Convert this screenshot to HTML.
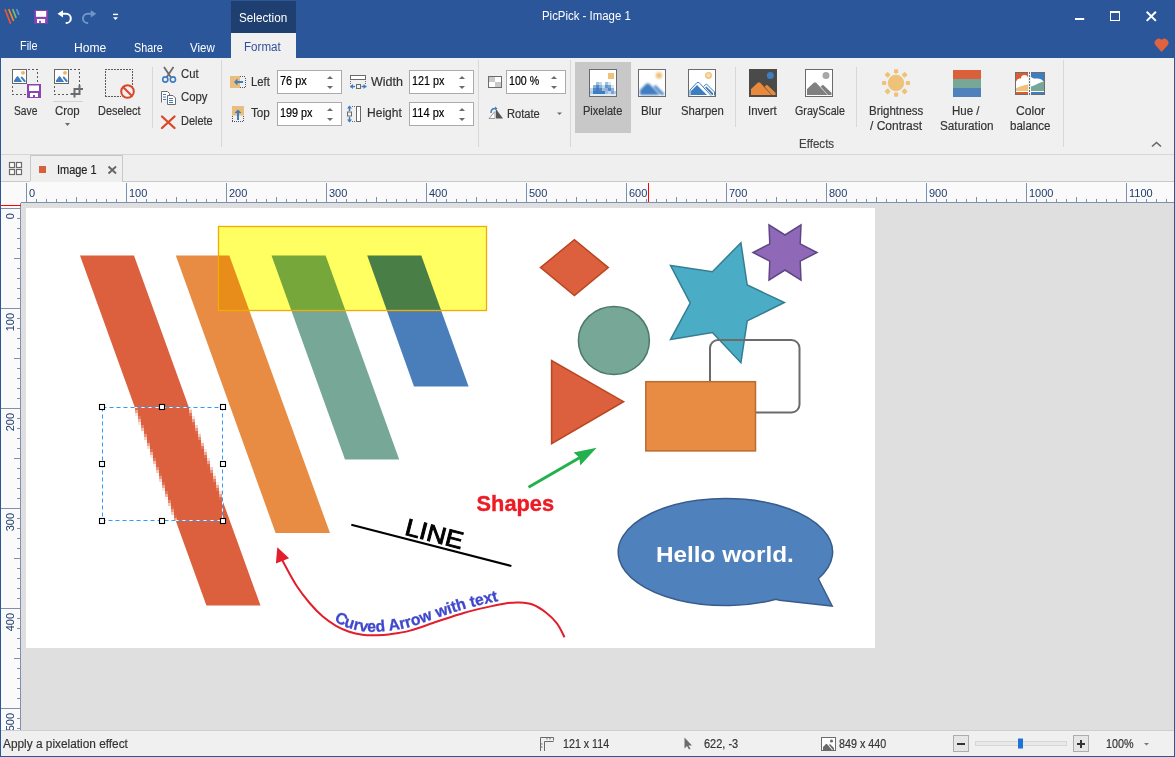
<!DOCTYPE html>
<html><head><meta charset="utf-8">
<style>
*{margin:0;padding:0;box-sizing:border-box}
html,body{width:1175px;height:757px;overflow:hidden;background:#f0f0f0;font-family:"Liberation Sans",sans-serif;font-size:12px;color:#444}
.a{position:absolute;white-space:nowrap;line-height:14px;transform-origin:0 0}
#txt div{-webkit-text-stroke:0.18px currentColor}
#txt div.w{-webkit-text-stroke:0}
#title{left:0;top:0;width:1175px;height:58px;background:#2b579a}
#selTab{left:231px;top:1px;width:65px;height:32px;background:#1f3f70}
#fmtTab{left:231px;top:33px;width:65px;height:25px;background:#f0f0f0}
.wt{color:#fff}
#ribbon{left:1px;top:58px;width:1173px;height:97px;background:#f0f0f0;border-bottom:1px solid #d6d6d6}
.sep{position:absolute;width:1px;background:#d8d8d8}
.lbl{position:absolute;white-space:nowrap;color:#444;text-align:center}
.inp{position:absolute;background:#fff;border:1px solid #ababab;height:24px}
.inp:after{content:"";position:absolute;right:8px;top:5px;border-left:3px solid transparent;border-right:3px solid transparent;border-bottom:3px solid #6b6b6b}.inp:before{content:"";position:absolute;right:8px;top:15px;border-left:3px solid transparent;border-right:3px solid transparent;border-top:3px solid #6b6b6b}
.inp span{position:absolute;left:3px;top:4px;color:#111}
#doctabs{left:1px;top:155px;width:1173px;height:27px;background:#f0f0f0;border-bottom:1px solid #d4d4d4}
#hruler{left:21px;top:182px;width:1153px;height:21px;background:#fafafa;border-bottom:1px solid #8a9ab8}
#vruler{left:1px;top:203px;width:20px;height:527px;background:#fafafa;border-right:1px solid #8a9ab8}
#canvas{left:21px;top:203px;width:1153px;height:527px;background:#dfdfdf}
#img{left:26px;top:208px;width:849px;height:440px;background:#fff}
#status{left:1px;top:730px;width:1173px;height:26px;background:#f0f0f0;border-top:1px solid #cfcfcf}
#bl{left:0;top:0;width:1px;height:757px;background:#2b579a}
#br{left:1174px;top:0;width:1px;height:757px;background:#2b579a}
#bb{left:0;top:756px;width:1175px;height:1px;background:#2b579a}
</style></head><body>
<div id="title" class="a"></div>
<div id="selTab" class="a"></div>
<div id="fmtTab" class="a"></div>
<svg class="a" style="left:0;top:0" width="1175" height="58" viewBox="0 0 1175 58">
 <g stroke-width="1.7" stroke-linecap="round">
  <path d="M5.2 9.7L10.4 23.2" stroke="#e8572f"/>
  <path d="M9 9.7L13.3 20.3" stroke="#f08a2c"/>
  <path d="M12.9 9.7L15.9 17.4" stroke="#7dbb6a"/>
  <path d="M16.8 9.7L18.8 14.3" stroke="#5a95d0"/>
 </g>
 <rect x="34.3" y="10" width="13.6" height="13.8" fill="#8a44b3"/>
 <rect x="36" y="11" width="10.2" height="5.8" fill="#fff"/>
 <path d="M37 18.9h8.1v4h-4.2v-2.1h-1.8v2.1h-2.1z" fill="#fff"/>
 <path d="M60 13.8h6.2a4.6 4.6 0 0 1 0 9.2h-0.5" fill="none" stroke="#fff" stroke-width="2"/>
 <path d="M57.5 13.8l5.5-3.6v7.2z" fill="#fff"/>
 <path d="M93.8 13.8h-6.2a4.6 4.6 0 0 0 0 9.2h0.5" fill="none" stroke="#7295c9" stroke-width="2"/>
 <path d="M96.3 13.8l-5.5-3.6v7.2z" fill="#7295c9"/>
 <rect x="113" y="13.7" width="5" height="1.4" fill="#fff"/>
 <path d="M113 17.2h5l-2.5 2.9z" fill="#fff"/>
 <!-- window controls -->
 <rect x="1075" y="18" width="9.2" height="2" fill="#fff"/>
 <rect x="1110.5" y="11.5" width="9" height="9" fill="none" stroke="#fff" stroke-width="1"/>
 <rect x="1110" y="11" width="10" height="2" fill="#fff"/>
 <path d="M1146.7 11.7l9.2 9.2M1155.9 11.7l-9.2 9.2" stroke="#fff" stroke-width="2"/>
 <path d="M1161.6 52l-5.6-6.2a4 4 0 0 1 5.6-5.9a4 4 0 0 1 5.6 5.9z" fill="#e0623f"/>
</svg>

<div id="ribbon" class="a"></div>
<!-- ribbon group 1 -->
<svg class="a" style="left:0;top:58px" width="480" height="97" viewBox="0 58 480 97">
 <g fill="none" stroke="#5a5a5a" stroke-width="1">
  <!-- save -->
  <rect x="12.5" y="69.5" width="14" height="14" fill="#fff" stroke="#666"/>
  <path d="M28 69.5H38M37.5 72V84M12.5 86V94M12 94.5H27" stroke-dasharray="2 2"/>
  <!-- crop -->
  <rect x="54.5" y="69.5" width="14" height="14" fill="#fff" stroke="#666"/>
  <path d="M70 69.5H80M79.5 72V85M54.5 86V94M54 94.5H70" stroke-dasharray="2 2"/>
  <!-- deselect -->
  <path d="M105 69.5H133M105.5 71V97M132.5 71V90M105 96.5H121" stroke-dasharray="2 1"/>
 </g>
 <g fill="#3f7dc1">
  <path d="M14 82V80.5L17 76.2H18L22.2 82Z M20.6 77.4L21.9 76.3L25.5 80.4V82H24Z"/>
  <path d="M56 82V80.5L59 76.2H60L64.2 82Z M62.6 77.4L63.9 76.3L67.5 80.4V82H66Z"/>
 </g>
 <circle cx="23" cy="72.8" r="1.9" fill="#f0b45a"/>
 <circle cx="65" cy="72.8" r="1.9" fill="#f0b45a"/>
 <!-- floppy -->
 <rect x="27" y="84" width="14" height="14" fill="#8a44b3"/>
 <rect x="29" y="85.5" width="10" height="5.5" fill="#fff"/>
 <path d="M30 93h8v4h-3v-2h-2v2h-3z" fill="#fff"/>
 <!-- crop tool -->
 <g fill="none" stroke="#6b6b6b" stroke-width="2">
  <rect x="74.5" y="89" width="5" height="5"/>
  <path d="M79.5 85v4M79.5 89h3.5M74.5 94h-4M74.5 94v3.5"/>
 </g>
 <!-- no sign -->
 <circle cx="127.5" cy="91.5" r="6.3" fill="#f0f0f0" stroke="#d9472b" stroke-width="2"/>
 <path d="M123 87l9 9" stroke="#d9472b" stroke-width="2"/>
 <!-- crop separator + arrow -->
 <rect x="53" y="101" width="30" height="1" fill="#d2d2d2"/>
 <path d="M65 123h5l-2.5 3z" fill="#6b6b6b"/>
 <!-- separators -->
 <rect x="152" y="67" width="1" height="61" fill="#d8d8d8"/>
 <rect x="221" y="60" width="1" height="87" fill="#d8d8d8"/>
 <rect x="478" y="60" width="1" height="87" fill="#d8d8d8"/>
 <!-- cut -->
 <path d="M164 67l7 10.5M173.5 67l-7 10.5" stroke="#6b6b6b" stroke-width="1.8" fill="none"/>
 <circle cx="165.3" cy="79.5" r="2.6" fill="none" stroke="#3f7dc1" stroke-width="1.6"/>
 <circle cx="172.9" cy="79.5" r="2.6" fill="none" stroke="#3f7dc1" stroke-width="1.6"/>
 <!-- copy -->
 <path d="M161.5 102.5v-11h6l2 2v1.5" fill="#fff" stroke="#6b6b6b" stroke-width="1"/>
 <path d="M167.5 95.5h5.5l2.5 2.5v6.5h-8z" fill="#fff" stroke="#6b6b6b" stroke-width="1"/>
 <path d="M163 94.5h3M163 97h3M163 99.5h3M169 98.5h4M169 100.5h4M169 102.5h4" stroke="#3f7dc1" stroke-width="1"/>
 <!-- delete -->
 <path d="M162 116.5l12.5 11.5M174.5 116.5l-12.5 11.5" stroke="#d9472b" stroke-width="2.3" fill="none" stroke-linecap="round"/>
 <!-- left icon -->
 <rect x="230" y="76" width="10" height="12" fill="#e9be7c"/>
 <path d="M240 76.5h6M245.5 78v10M240 87.5h6" fill="none" stroke="#555" stroke-dasharray="1 1"/>
 <path d="M235 82h8" stroke="#3f7dc1" stroke-width="2"/>
 <path d="M234 82l3.5-3.5v7z" fill="#3f7dc1"/>
 <!-- top icon -->
 <rect x="232" y="106" width="12" height="9.5" fill="#e9be7c"/>
 <path d="M232.5 116v6M232 121.5h12M243.5 116v6" fill="none" stroke="#555" stroke-dasharray="1 1"/>
 <path d="M238 112v8" stroke="#3f7dc1" stroke-width="2"/>
 <path d="M238 109.5l3.5 3.5h-7z" fill="#3f7dc1"/>
 <!-- width icon -->
 <rect x="350.5" y="75.5" width="15" height="4" fill="#fff" stroke="#6b6b6b"/>
 <path d="M350.5 81v3M365.5 81v3" stroke="#6b6b6b" stroke-dasharray="1 1"/>
 <rect x="356.5" y="84.5" width="4" height="4" fill="none" stroke="#6b6b6b"/>
 <path d="M350 86.5h5M361.5 86.5h5" stroke="#3f7dc1" stroke-width="1.5"/>
 <path d="M350 86.5l3-2.5v5zM366.5 86.5l-3-2.5v5z" fill="#3f7dc1"/>
 <!-- height icon -->
 <rect x="356.5" y="106.5" width="4" height="15" fill="#fff" stroke="#6b6b6b"/>
 <path d="M352 106.5h3M352 121.5h3" stroke="#6b6b6b" stroke-dasharray="1 1"/>
 <rect x="347.5" y="112" width="4" height="4" fill="none" stroke="#6b6b6b"/>
 <path d="M349.5 106v5M349.5 117v5" stroke="#3f7dc1" stroke-width="1.5"/>
 <path d="M349.5 105.5l2.5 3h-5zM349.5 122.5l2.5-3h-5z" fill="#3f7dc1"/>
</svg>
<div class="inp" style="left:277px;top:70px;width:65px"></div>
<div class="inp" style="left:277px;top:102px;width:65px"></div>
<div class="inp" style="left:409px;top:70px;width:65px"></div>
<div class="inp" style="left:409px;top:102px;width:65px"></div>
<svg class="a" style="left:480px;top:58px" width="695" height="97" viewBox="480 58 695 97">
 <defs>
  <filter id="bl1" x="-20%" y="-20%" width="140%" height="140%"><feGaussianBlur stdDeviation="1"/></filter>
 </defs>
 <!-- transparency -->
 <rect x="488.5" y="76.5" width="13" height="11" fill="#fff" stroke="#6b6b6b"/>
 <rect x="489" y="77" width="6" height="5" fill="#c9c9c9"/>
 <rect x="495" y="82" width="6" height="5" fill="#c9c9c9"/>
 <!-- rotate -->
 <path d="M489 118.5l6-7v7z" fill="#fff" stroke="#9a9a9a" stroke-width="1"/>
 <path d="M496 109l7 9.5h-7z" fill="#555"/>
 <path d="M491 113c0-3 1.5-4.5 4-4.5" fill="none" stroke="#3f7dc1" stroke-width="1.5"/>
 <path d="M495 106.5l2.5 2-2.5 2z" fill="#3f7dc1"/>
 <path d="M557 112.5h5l-2.5 2.5z" fill="#6b6b6b"/>
 <!-- separators -->
 <rect x="570" y="60" width="1" height="87" fill="#d8d8d8"/>
 <rect x="735" y="67" width="1" height="60" fill="#d8d8d8"/>
 <rect x="856" y="67" width="1" height="60" fill="#d8d8d8"/>
 <rect x="1063" y="60" width="1" height="87" fill="#d8d8d8"/>
 <!-- pixelate highlight -->
 <rect x="575" y="62" width="56" height="71" fill="#c8c8c8"/>
 <!-- pixelate icon -->
 <rect x="589.5" y="69.5" width="27" height="27" fill="#fff" stroke="#6b6b6b"/>
 <rect x="608" y="73" width="6" height="6" fill="#efc27a"/>
 <g fill="#3f7dc1"><rect x="596" y="82" width="3" height="3" opacity="0.5"/><rect x="599" y="82" width="3" height="3" opacity="0.3"/><rect x="605" y="82" width="3" height="3" opacity="0.5"/><rect x="608" y="82" width="3" height="3" opacity="0.2"/><rect x="593" y="85" width="3" height="3" opacity="0.6"/><rect x="596" y="85" width="3" height="3" opacity="0.9"/><rect x="599" y="85" width="3" height="3" opacity="0.6"/><rect x="602" y="85" width="3" height="3" opacity="0.3"/><rect x="605" y="85" width="3" height="3" opacity="0.8"/><rect x="608" y="85" width="3" height="3" opacity="0.7"/><rect x="611" y="85" width="3" height="3" opacity="0.2"/><rect x="590" y="88" width="3" height="3" opacity="0.3"/><rect x="593" y="88" width="3" height="3" opacity="0.9"/><rect x="596" y="88" width="3" height="3" opacity="1"/><rect x="599" y="88" width="3" height="3" opacity="0.9"/><rect x="602" y="88" width="3" height="3" opacity="0.5"/><rect x="605" y="88" width="3" height="3" opacity="0.6"/><rect x="608" y="88" width="3" height="3" opacity="0.9"/><rect x="611" y="88" width="3" height="3" opacity="0.6"/><rect x="590" y="91" width="3" height="3" opacity="0.4"/><rect x="593" y="91" width="3" height="3" opacity="1"/><rect x="596" y="91" width="3" height="3" opacity="1"/><rect x="599" y="91" width="3" height="3" opacity="1"/><rect x="602" y="91" width="3" height="3" opacity="1"/><rect x="605" y="91" width="3" height="3" opacity="0.5"/><rect x="608" y="91" width="3" height="3" opacity="0.35"/><rect x="611" y="91" width="3" height="3" opacity="0.7"/><rect x="614" y="91" width="3" height="3" opacity="0.4"/><rect x="590" y="94" width="26" height="2" opacity=".15"/></g>
 <!-- blur icon -->
 <rect x="638.5" y="69.5" width="27" height="27" fill="#fff" stroke="#6b6b6b"/>
 <g filter="url(#bl1)" transform="translate(638 69)">
  <circle cx="21" cy="6.5" r="3.2" fill="#efc27a"/>
  <path d="M2 26v-5l6.5-6.5h2.5l11 11.5z M15.5 17.5l2-1.5 8.5 8.5v1.5h-2.5z" fill="#3f7dc1"/>
 </g>
 <!-- sharpen icon -->
 <rect x="688.5" y="69.5" width="27" height="27" fill="#fff" stroke="#6b6b6b"/>
 <g transform="translate(688 69)">
  <circle cx="20.5" cy="6.5" r="2.8" fill="#f6dcae" stroke="#efc27a" stroke-width="1.3"/>
  <path d="M3 26v-4l6-6 10 10z M17 18.5l1.5-1 6.5 6.5v2h-1z" fill="#3f7dc1"/>
  <path d="M2 26.5v-5.5l7-7.5h2l12 13 M15.5 17.5l3-2.5 8 8v3.5" fill="none" stroke="#3f7dc1" stroke-width="1"/>
 </g>
 <!-- invert -->
 <rect x="749" y="69" width="28" height="28" fill="#4a4a4a"/>
 <g transform="translate(749 69)">
  <circle cx="21.3" cy="6.5" r="3.5" fill="#3f7dc1"/>
  <path d="M2 26v-6l7-6.5h2l11.5 12.5z M15.5 17.5l2.5-1.8 8.5 8v2.3h-3.5z" fill="#e8893c"/>
 </g>
 <!-- grayscale -->
 <rect x="805.5" y="69.5" width="27" height="27" fill="#fff" stroke="#6b6b6b"/>
 <g transform="translate(805 69)">
  <circle cx="21" cy="6.5" r="3.5" fill="#a8a8a8"/>
  <path d="M2 26v-6l7-6.5h2l11.5 12.5z M15.5 17.5l2.5-1.8 8.5 8v2.3h-3.5z" fill="#808080"/>
 </g>
 <!-- brightness -->
 <g fill="#efc27a">
  <circle cx="896" cy="83" r="8.2"/>
  <rect x="894" y="69.2" width="4.2" height="4.2" rx=".8"/><rect x="894" y="92.6" width="4.2" height="4.2" rx=".8"/>
  <rect x="882" y="80.9" width="4.2" height="4.2" rx=".8"/><rect x="905.8" y="80.9" width="4.2" height="4.2" rx=".8"/>
  <rect x="885.4" y="72.6" width="4.4" height="4.4" rx=".8" transform="rotate(45 887.6 74.8)"/>
  <rect x="902.4" y="72.6" width="4.4" height="4.4" rx=".8" transform="rotate(45 904.6 74.8)"/>
  <rect x="885.4" y="89.2" width="4.4" height="4.4" rx=".8" transform="rotate(45 887.6 91.4)"/>
  <rect x="902.4" y="89.2" width="4.4" height="4.4" rx=".8" transform="rotate(45 904.6 91.4)"/>
 </g>
 <!-- hue -->
 <rect x="953" y="70" width="28" height="9" fill="#d9603b"/>
 <rect x="953" y="79" width="28" height="9" fill="#76a797"/>
 <rect x="953" y="88" width="28" height="9" fill="#4f81bd"/>
 <!-- color balance -->
 <rect x="1015" y="72" width="30" height="23" fill="#6e6e6e"/>
 <rect x="1016" y="73" width="12" height="21" fill="#fff"/>
 <rect x="1031" y="73" width="13" height="21" fill="#fff"/>
 <rect x="1028" y="72" width="3" height="23" fill="#f0f0f0"/>
 <path d="M1029.5 72v23" stroke="#6e6e6e" stroke-dasharray="2 1"/>
 <path d="M1016 73h12v5.5a3.5 3.5 0 0 0 -7 0c-2 0-4 .5-5 3z" fill="#dd5b33"/>
 <path d="M1016 88.5c3-2 8-3.5 12-4v6.5h-12z" fill="#efc27a"/>
 <rect x="1016" y="92" width="12" height="2" fill="#dd5b33"/>
 <path d="M1031 73h13v9c-2-3-5-4-8-3.5c-2 .3-4-.5-5-1.5z" fill="#3f7dc1"/>
 <path d="M1031 86.5c4-1 8-4 13-5v9.5h-13z" fill="#76a797"/>
 <rect x="1031" y="92" width="13" height="2" fill="#3f7dc1"/>
 <!-- collapse caret -->
 <path d="M1152 146.5l4.5-4 4.5 4" fill="none" stroke="#666" stroke-width="1.6"/>
</svg>
<div class="inp" style="left:506px;top:70px;width:60px"></div>




<svg class="a" style="left:0;top:155px" width="1175" height="575" viewBox="0 155 1175 575">
<rect x="1" y="155" width="1173" height="27" fill="#efefef"/>
<rect x="1" y="181" width="29" height="1" fill="#c9c9c9"/>
<rect x="122" y="181" width="1052" height="1" fill="#c9c9c9"/>
<rect x="30" y="155" width="1" height="26" fill="#c9c9c9"/>
<rect x="122" y="155" width="1" height="26" fill="#c9c9c9"/>
<rect x="31" y="155" width="91" height="1" fill="#c6c6c6"/>
<rect x="9.5" y="162.5" width="5" height="5" fill="#fff" stroke="#6b6b6b" stroke-width="1.2"/>
<rect x="16.5" y="162.5" width="5" height="5" fill="#fff" stroke="#6b6b6b" stroke-width="1.2"/>
<rect x="9.5" y="169.5" width="5" height="5" fill="#fff" stroke="#6b6b6b" stroke-width="1.2"/>
<rect x="16.5" y="169.5" width="5" height="5" fill="#fff" stroke="#6b6b6b" stroke-width="1.2"/>
<rect x="39" y="166" width="7" height="7" fill="#d9603b"/>
<path d="M108.5 166.5l7.5 7M116 166.5l-7.5 7" stroke="#666" stroke-width="1.9"/>
<rect x="21" y="203" width="1153" height="527" fill="#dfdfdf"/>
<rect x="26" y="208" width="849" height="440" fill="#fff"/>
<rect x="1" y="182" width="1173" height="20" fill="#fafafa"/>
<rect x="1" y="182" width="19" height="548" fill="#fafafa"/>
<rect x="21" y="202" width="1153" height="1" fill="#7d90b2"/>
<rect x="20" y="203" width="1" height="527" fill="#7d90b2"/>
<path d="M26.5 183V202M36.5 199V202M46.5 199V202M56.5 199V202M66.5 199V202M76.5 197V202M86.5 199V202M96.5 199V202M106.5 199V202M116.5 199V202M126.5 183V202M136.5 199V202M146.5 199V202M156.5 199V202M166.5 199V202M176.5 197V202M186.5 199V202M196.5 199V202M206.5 199V202M216.5 199V202M226.5 183V202M236.5 199V202M246.5 199V202M256.5 199V202M266.5 199V202M276.5 197V202M286.5 199V202M296.5 199V202M306.5 199V202M316.5 199V202M326.5 183V202M336.5 199V202M346.5 199V202M356.5 199V202M366.5 199V202M376.5 197V202M386.5 199V202M396.5 199V202M406.5 199V202M416.5 199V202M426.5 183V202M436.5 199V202M446.5 199V202M456.5 199V202M466.5 199V202M476.5 197V202M486.5 199V202M496.5 199V202M506.5 199V202M516.5 199V202M526.5 183V202M536.5 199V202M546.5 199V202M556.5 199V202M566.5 199V202M576.5 197V202M586.5 199V202M596.5 199V202M606.5 199V202M616.5 199V202M626.5 183V202M636.5 199V202M646.5 199V202M656.5 199V202M666.5 199V202M676.5 197V202M686.5 199V202M696.5 199V202M706.5 199V202M716.5 199V202M726.5 183V202M736.5 199V202M746.5 199V202M756.5 199V202M766.5 199V202M776.5 197V202M786.5 199V202M796.5 199V202M806.5 199V202M816.5 199V202M826.5 183V202M836.5 199V202M846.5 199V202M856.5 199V202M866.5 199V202M876.5 197V202M886.5 199V202M896.5 199V202M906.5 199V202M916.5 199V202M926.5 183V202M936.5 199V202M946.5 199V202M956.5 199V202M966.5 199V202M976.5 197V202M986.5 199V202M996.5 199V202M1006.5 199V202M1016.5 199V202M1026.5 183V202M1036.5 199V202M1046.5 199V202M1056.5 199V202M1066.5 199V202M1076.5 197V202M1086.5 199V202M1096.5 199V202M1106.5 199V202M1116.5 199V202M1126.5 183V202M1136.5 199V202M1146.5 199V202M1156.5 199V202M1166.5 199V202M1 208.5H20M17 218.5H20M17 228.5H20M17 238.5H20M17 248.5H20M14 258.5H20M17 268.5H20M17 278.5H20M17 288.5H20M17 298.5H20M1 308.5H20M17 318.5H20M17 328.5H20M17 338.5H20M17 348.5H20M14 358.5H20M17 368.5H20M17 378.5H20M17 388.5H20M17 398.5H20M1 408.5H20M17 418.5H20M17 428.5H20M17 438.5H20M17 448.5H20M14 458.5H20M17 468.5H20M17 478.5H20M17 488.5H20M17 498.5H20M1 508.5H20M17 518.5H20M17 528.5H20M17 538.5H20M17 548.5H20M14 558.5H20M17 568.5H20M17 578.5H20M17 588.5H20M17 598.5H20M1 608.5H20M17 618.5H20M17 628.5H20M17 638.5H20M17 648.5H20M14 658.5H20M17 668.5H20M17 678.5H20M17 688.5H20M17 698.5H20M1 708.5H20M17 718.5H20M17 728.5H20" stroke="#7d90b2" stroke-width="1"/>
<g font-family="Liberation Sans" font-size="11" fill="#1f3b6b">
<text x="29" y="197">0</text>
<text x="129" y="197">100</text>
<text x="229" y="197">200</text>
<text x="329" y="197">300</text>
<text x="429" y="197">400</text>
<text x="529" y="197">500</text>
<text x="629" y="197">600</text>
<text x="729" y="197">700</text>
<text x="829" y="197">800</text>
<text x="929" y="197">900</text>
<text x="1029" y="197">1000</text>
<text x="1129" y="197">1100</text>
<text transform="translate(14 213) rotate(-90)" text-anchor="end">0</text>
<text transform="translate(14 313) rotate(-90)" text-anchor="end">100</text>
<text transform="translate(14 413) rotate(-90)" text-anchor="end">200</text>
<text transform="translate(14 513) rotate(-90)" text-anchor="end">300</text>
<text transform="translate(14 613) rotate(-90)" text-anchor="end">400</text>
<text transform="translate(14 713) rotate(-90)" text-anchor="end">500</text>
</g>
<rect x="648" y="183" width="1" height="19" fill="#f00"/>
<rect x="1" y="205" width="20" height="1" fill="#f00"/>
</svg>
<svg class="a" style="left:26px;top:208px" width="849" height="440" viewBox="26 208 849 440" font-family="Liberation Sans">
<defs>
 <clipPath id="selc"><rect x="102" y="407" width="121" height="114"/></clipPath>
 <clipPath id="nosel"><path d="M26 208H875V648H26Z M102 407V521H223V407Z" clip-rule="evenodd"/></clipPath>
 <path id="tp" d="M316.1 605.1 L317.4 606.5 L318.7 607.9 L320.0 609.2 L321.3 610.5 L322.6 611.7 L323.8 612.8 L325.1 613.9 L326.3 615.0 L327.6 616.0 L328.9 617.0 L330.1 617.9 L331.4 618.8 L332.6 619.6 L333.9 620.5 L335.2 621.2 L336.5 622.0 L337.7 622.8 L339.0 623.5 L340.3 624.2 L341.5 624.8 L342.8 625.4 L344.0 626.0 L345.3 626.6 L346.6 627.1 L347.8 627.6 L349.1 628.0 L350.3 628.5 L351.6 628.9 L352.8 629.3 L354.1 629.6 L355.3 629.9 L356.6 630.2 L357.8 630.5 L359.1 630.7 L360.3 631.0 L361.6 631.2 L362.8 631.3 L364.1 631.5 L365.3 631.6 L366.6 631.7 L367.9 631.8 L369.2 631.8 L370.4 631.8 L371.7 631.8 L373.0 631.8 L374.3 631.8 L375.6 631.8 L376.9 631.8 L378.1 631.8 L379.3 631.7 L380.4 631.7 L381.5 631.6 L382.7 631.5 L384.0 631.4 L385.3 631.3 L386.7 631.1 L388.3 630.9 L390.1 630.7 L392.0 630.4 L393.9 630.2 L395.9 629.9 L398.0 629.6 L400.1 629.2 L402.3 628.8 L404.5 628.3 L406.8 627.8 L409.1 627.2 L411.5 626.5 L414.0 625.8 L416.6 624.9 L419.3 624.0 L422.1 623.1 L424.9 622.1 L427.7 621.1 L430.5 620.1 L433.3 619.1 L436.1 618.2 L438.8 617.3 L441.5 616.4 L444.3 615.5 L447.0 614.5 L449.8 613.6 L452.5 612.7 L455.3 611.8 L458.0 611.0 L460.8 610.1 L463.5 609.3 L466.4 608.6 L469.3 607.8 L472.3 607.0 L475.2 606.3 L478.2 605.6 L481.0 604.9 L483.8 604.3 L486.4 603.7 L488.8 603.2 L490.9 602.7 L492.8 602.3 L494.5 601.9 L496.0 601.5 L497.4 601.2 L498.6 601.0 L499.9 600.7 L501.0 600.5 L502.2 600.3 L503.5 600.1 L504.8 599.9 L506.2 599.8 L507.6 599.6 L509.0 599.4 L510.4 599.3 L511.8 599.2 L513.3 599.1 L514.7 599.0 L516.1 599.0 L517.6 599.0 L519.0 599.0 L520.4 599.1 L521.8 599.1 L523.2 599.2 L524.6 599.3 L526.1 599.5 L527.6 599.7 L529.1 599.9 L530.6 600.3 L532.2 600.7 L533.7 601.2 L535.3 601.8 L536.8 602.6 L538.3 603.3 L539.9 604.2"/>
</defs>
<path d="M80 255.5H134L260.5 605.6H206.4Z" fill="#dc5f3e" clip-path="url(#nosel)"/>
<g fill="#dc5f3e" shape-rendering="crispEdges"><rect x="135" y="407" width="3" height="3" opacity="0.92"/><rect x="138" y="407" width="51" height="3"/><rect x="189" y="407" width="3" height="3" opacity="0.11"/><rect x="135" y="410" width="3" height="3" opacity="0.56"/><rect x="138" y="410" width="51" height="3"/><rect x="189" y="410" width="3" height="3" opacity="0.47"/><rect x="135" y="413" width="3" height="3" opacity="0.19"/><rect x="138" y="413" width="51" height="3"/><rect x="189" y="413" width="3" height="3" opacity="0.83"/><rect x="138" y="416" width="3" height="3" opacity="0.83"/><rect x="141" y="416" width="51" height="3"/><rect x="192" y="416" width="3" height="3" opacity="0.19"/><rect x="138" y="419" width="3" height="3" opacity="0.47"/><rect x="141" y="419" width="51" height="3"/><rect x="192" y="419" width="3" height="3" opacity="0.56"/><rect x="138" y="422" width="3" height="3" opacity="0.14"/><rect x="141" y="422" width="51" height="3"/><rect x="192" y="422" width="3" height="3" opacity="0.92"/><rect x="141" y="425" width="3" height="3" opacity="0.75"/><rect x="144" y="425" width="51" height="3"/><rect x="195" y="425" width="3" height="3" opacity="0.28"/><rect x="141" y="428" width="3" height="3" opacity="0.39"/><rect x="144" y="428" width="51" height="3"/><rect x="195" y="428" width="3" height="3" opacity="0.64"/><rect x="141" y="431" width="3" height="3" opacity="0.06"/><rect x="144" y="431" width="3" height="3" opacity="0.97"/><rect x="147" y="431" width="48" height="3"/><rect x="195" y="431" width="3" height="3" opacity="0.94"/><rect x="198" y="431" width="3" height="3" opacity="0.06"/><rect x="144" y="434" width="3" height="3" opacity="0.67"/><rect x="147" y="434" width="51" height="3"/><rect x="198" y="434" width="3" height="3" opacity="0.36"/><rect x="144" y="437" width="3" height="3" opacity="0.31"/><rect x="147" y="437" width="51" height="3"/><rect x="198" y="437" width="3" height="3" opacity="0.72"/><rect x="144" y="440" width="3" height="3" opacity="0.03"/><rect x="147" y="440" width="3" height="3" opacity="0.94"/><rect x="150" y="440" width="51" height="3"/><rect x="201" y="440" width="3" height="3" opacity="0.08"/><rect x="147" y="443" width="3" height="3" opacity="0.58"/><rect x="150" y="443" width="51" height="3"/><rect x="201" y="443" width="3" height="3" opacity="0.44"/><rect x="147" y="446" width="3" height="3" opacity="0.22"/><rect x="150" y="446" width="51" height="3"/><rect x="201" y="446" width="3" height="3" opacity="0.81"/><rect x="150" y="449" width="3" height="3" opacity="0.86"/><rect x="153" y="449" width="51" height="3"/><rect x="204" y="449" width="3" height="3" opacity="0.17"/><rect x="150" y="452" width="3" height="3" opacity="0.50"/><rect x="153" y="452" width="51" height="3"/><rect x="204" y="452" width="3" height="3" opacity="0.53"/><rect x="150" y="455" width="3" height="3" opacity="0.14"/><rect x="153" y="455" width="51" height="3"/><rect x="204" y="455" width="3" height="3" opacity="0.89"/><rect x="153" y="458" width="3" height="3" opacity="0.81"/><rect x="156" y="458" width="51" height="3"/><rect x="207" y="458" width="3" height="3" opacity="0.25"/><rect x="153" y="461" width="3" height="3" opacity="0.42"/><rect x="156" y="461" width="51" height="3"/><rect x="207" y="461" width="3" height="3" opacity="0.61"/><rect x="153" y="464" width="3" height="3" opacity="0.08"/><rect x="156" y="464" width="3" height="3" opacity="0.97"/><rect x="159" y="464" width="48" height="3"/><rect x="207" y="464" width="3" height="3" opacity="0.94"/><rect x="210" y="464" width="3" height="3" opacity="0.03"/><rect x="156" y="467" width="3" height="3" opacity="0.69"/><rect x="159" y="467" width="51" height="3"/><rect x="210" y="467" width="3" height="3" opacity="0.33"/><rect x="156" y="470" width="3" height="3" opacity="0.33"/><rect x="159" y="470" width="51" height="3"/><rect x="210" y="470" width="3" height="3" opacity="0.69"/><rect x="156" y="473" width="3" height="3" opacity="0.03"/><rect x="159" y="473" width="3" height="3" opacity="0.94"/><rect x="162" y="473" width="48" height="3"/><rect x="210" y="473" width="3" height="3" opacity="0.97"/><rect x="213" y="473" width="3" height="3" opacity="0.08"/><rect x="159" y="476" width="3" height="3" opacity="0.64"/><rect x="162" y="476" width="51" height="3"/><rect x="213" y="476" width="3" height="3" opacity="0.42"/><rect x="159" y="479" width="3" height="3" opacity="0.25"/><rect x="162" y="479" width="51" height="3"/><rect x="213" y="479" width="3" height="3" opacity="0.78"/><rect x="162" y="482" width="3" height="3" opacity="0.89"/><rect x="165" y="482" width="51" height="3"/><rect x="216" y="482" width="3" height="3" opacity="0.14"/><rect x="162" y="485" width="3" height="3" opacity="0.53"/><rect x="165" y="485" width="51" height="3"/><rect x="216" y="485" width="3" height="3" opacity="0.50"/><rect x="162" y="488" width="3" height="3" opacity="0.17"/><rect x="165" y="488" width="51" height="3"/><rect x="216" y="488" width="3" height="3" opacity="0.86"/><rect x="165" y="491" width="3" height="3" opacity="0.81"/><rect x="168" y="491" width="51" height="3"/><rect x="219" y="491" width="3" height="3" opacity="0.22"/><rect x="165" y="494" width="3" height="3" opacity="0.47"/><rect x="168" y="494" width="51" height="3"/><rect x="219" y="494" width="3" height="3" opacity="0.58"/><rect x="165" y="497" width="3" height="3" opacity="0.08"/><rect x="168" y="497" width="51" height="3"/><rect x="219" y="497" width="3" height="3" opacity="0.92"/><rect x="222" y="497" width="1" height="3" opacity="0.08"/><rect x="168" y="500" width="3" height="3" opacity="0.72"/><rect x="171" y="500" width="51" height="3"/><rect x="222" y="500" width="1" height="3" opacity="0.83"/><rect x="168" y="503" width="3" height="3" opacity="0.36"/><rect x="171" y="503" width="52" height="3"/><rect x="168" y="506" width="3" height="3" opacity="0.06"/><rect x="171" y="506" width="3" height="3" opacity="0.94"/><rect x="174" y="506" width="49" height="3"/><rect x="171" y="509" width="3" height="3" opacity="0.64"/><rect x="174" y="509" width="49" height="3"/><rect x="171" y="512" width="3" height="3" opacity="0.31"/><rect x="174" y="512" width="49" height="3"/><rect x="174" y="515" width="3" height="3" opacity="0.92"/><rect x="177" y="515" width="46" height="3"/><rect x="174" y="518" width="3" height="3" opacity="0.56"/><rect x="177" y="518" width="46" height="3"/></g>
<path d="M175.8 255.5H229.3L330 533H275.6Z" fill="#e88c43"/>
<path d="M271.5 255.5H325.6L399.2 459.6H345Z" fill="#76a797"/>
<path d="M367.2 255.5H421.3L468.6 386.6H414Z" fill="#4a7ebb"/>
<rect x="218.5" y="226.5" width="268" height="84" fill="#ffff00" fill-opacity=".62" style="mix-blend-mode:multiply"/>
<rect x="218.5" y="226.5" width="268" height="84" fill="none" stroke="#f0ac00" stroke-width="1.3"/>
<path d="M540.5 267.6L574.4 239.7L608.3 267.6L574.4 295.5Z" fill="#dc5f3e" stroke="#b9461f" stroke-width="1.5"/>
<ellipse cx="613.9" cy="340.4" rx="35.5" ry="34" fill="#76a797" stroke="#4c7869" stroke-width="1.5"/>
<path d="M551.6 360.5L551.6 443.6L623.6 401.7Z" fill="#dc5f3e" stroke="#b9461f" stroke-width="1.5"/>
<path d="M740.9 242.8L747.2 285L784.4 302.5L747.2 320.9L740.9 362.7L712.4 332.6L670.5 339.6L690.2 303L670.5 265.4L712.4 271.7Z" fill="#4bacc6" stroke="#357d91" stroke-width="1.5" stroke-linejoin="miter"/>
<path d="M769.0 224.8 L785.0 235.0 L801.0 224.8 L800.2 243.8 L817.0 252.5 L800.2 261.2 L801.0 280.2 L785.0 270.0 L769.0 280.2 L769.8 261.2 L753.0 252.5 L769.8 243.8Z" fill="#9068b8" stroke="#5e4683" stroke-width="1.5"/>
<rect x="710" y="340" width="89.5" height="72.5" rx="8" fill="none" stroke="#6b6b6b" stroke-width="2"/>
<rect x="645.8" y="381.7" width="109.7" height="69.2" fill="#e88c43" stroke="#b96c30" stroke-width="1.5"/>
<path d="M528.5 487.2L586 454" stroke="#22b14c" stroke-width="3"/>
<path d="M596.6 447.7L573.6 452.6L579.3 457.6L580.3 465.5Z" fill="#22b14c"/>
<text x="476.6" y="511" font-size="22.5" font-weight="bold" fill="#ed1c24" stroke="#ed1c24" stroke-width=".4" textLength="77.4" lengthAdjust="spacingAndGlyphs">Shapes</text>
<path d="M351.3 524.7L511.4 566" stroke="#000" stroke-width="2"/>
<g transform="rotate(14.46 351.3 524.7)"><text x="404.5" y="521" font-size="24" fill="#000" stroke="#000" stroke-width=".9" textLength="59" lengthAdjust="spacingAndGlyphs">LINE</text></g>
<path d="M818.30 578.75L832.2 606L779.5 600.3L776.00 599.25A107.2 53.6 0 1 1 818.30 578.75Z" fill="#4f81bd" stroke="#385d8a" stroke-width="1.5"/>
<text x="656" y="561.5" font-size="22.5" font-weight="bold" fill="#fff" textLength="137.8" lengthAdjust="spacingAndGlyphs">Hello world.</text>
<path d="M564.5 637.2C563.3 634.9 560.1 627.7 557.1 623.6C554.1 619.5 550.3 615.9 546.2 612.7C542.1 609.5 537.0 606.2 532.5 604.5C528.0 602.8 523.4 602.7 518.9 602.5C514.4 602.3 509.8 602.8 505.3 603.4C500.8 604.0 498.5 604.5 491.7 606.1C484.9 607.7 473.6 610.1 464.5 612.7C455.4 615.3 446.3 618.5 437.2 621.5C428.1 624.5 418.1 628.5 410.0 630.6C401.9 632.8 394.5 633.6 388.8 634.4C383.1 635.2 380.1 635.2 375.7 635.3C371.3 635.4 366.8 635.4 362.4 634.8C358.0 634.2 353.6 633.3 349.2 631.8C344.8 630.3 340.4 628.3 336.0 625.8C331.6 623.3 327.2 620.4 322.8 616.6C318.4 612.8 314.0 608.2 309.6 603.0C305.2 597.8 300.7 592.1 296.4 585.5C292.1 578.9 286.5 568.2 284.0 563.5C281.5 558.8 281.9 558.1 281.5 557.0" fill="none" stroke="#e21e2b" stroke-width="2"/>
<path d="M277.3 547.3L275.9 563.5L289.1 558.2Z" fill="#e21e2b"/>
<text font-size="16" font-weight="bold" fill="#3f48cc" stroke="#3f48cc" stroke-width=".3"><textPath href="#tp" startOffset="23.5" textLength="171.2" lengthAdjust="spacingAndGlyphs">Curved Arrow with text</textPath></text>
<rect x="102.5" y="407.5" width="120" height="113" fill="none" stroke="#fff" stroke-width="1"/>
<rect x="102.5" y="407.5" width="120" height="113" fill="none" stroke="#3399ff" stroke-width="1" stroke-dasharray="4 3"/>
<rect x="99.5" y="404.5" width="5" height="5" fill="#fff" stroke="#000" stroke-width="1.1"/><rect x="159.5" y="404.5" width="5" height="5" fill="#fff" stroke="#000" stroke-width="1.1"/><rect x="220.5" y="404.5" width="5" height="5" fill="#fff" stroke="#000" stroke-width="1.1"/><rect x="99.5" y="461.5" width="5" height="5" fill="#fff" stroke="#000" stroke-width="1.1"/><rect x="220.5" y="461.5" width="5" height="5" fill="#fff" stroke="#000" stroke-width="1.1"/><rect x="99.5" y="518.5" width="5" height="5" fill="#fff" stroke="#000" stroke-width="1.1"/><rect x="159.5" y="518.5" width="5" height="5" fill="#fff" stroke="#000" stroke-width="1.1"/><rect x="220.5" y="518.5" width="5" height="5" fill="#fff" stroke="#000" stroke-width="1.1"/>
</svg>
<svg class="a" style="left:0;top:730px" width="1175" height="27" viewBox="0 730 1175 27">
<rect x="1" y="730" width="1173" height="26" fill="#f0f0f0"/>
<rect x="1" y="730" width="1173" height="1" fill="#cfcfcf"/>
<path d="M540.5 751v-13.5h13v3M544.5 751v-9.5h9M540.5 744h2M540.5 747h2M547 737.5v2M550 737.5v2" fill="none" stroke="#6b6b6b" stroke-width="1"/>
<path d="M684.5 737.5v11l2.5-2.5 2 3.5 1.5-.8-2-3.3h3.5z" fill="#6b6b6b"/>
<rect x="821.5" y="737.5" width="14" height="13" fill="#fff" stroke="#6b6b6b"/>
<circle cx="831.5" cy="741" r="1.6" fill="#6b6b6b"/>
<path d="M823 750v-3l3-3h1l5 6zM829 745l1-1 4 4v2h-1z" fill="#6b6b6b"/>
<rect x="953.5" y="735.5" width="15" height="16" fill="#e6e6e6" stroke="#adadad"/>
<rect x="957" y="743" width="8" height="2" fill="#333"/>
<rect x="1073.5" y="735.5" width="15" height="16" fill="#e6e6e6" stroke="#adadad"/>
<rect x="1077" y="743" width="8" height="2" fill="#333"/><rect x="1080" y="740" width="2" height="8" fill="#333"/>
<rect x="975.5" y="741.5" width="91" height="4" fill="#e9e9e9" stroke="#d6d6d6"/>
<rect x="1018" y="738.5" width="5" height="10" fill="#1f73d4"/>
<path d="M1144 743h5l-2.5 2.5z" fill="#777"/>
</svg>


<div id="txt">
<div class="a w" style="left:542.20px;top:9.24px;color:#fff;transform:scaleX(0.951)">PicPick - Image 1</div>
<div class="a w" style="left:239.00px;top:10.84px;color:#fff;transform:scaleX(0.976)">Selection</div>
<div class="a w" style="left:20.10px;top:39.24px;color:#fff;transform:scaleX(0.905)">File</div>
<div class="a w" style="left:74.20px;top:40.84px;color:#fff;transform:scaleX(1.011)">Home</div>
<div class="a w" style="left:134.10px;top:40.84px;color:#fff;transform:scaleX(0.897)">Share</div>
<div class="a w" style="left:189.70px;top:40.84px;color:#fff;transform:scaleX(0.957)">View</div>
<div class="a w" style="left:244.30px;top:40.44px;color:#34509c;transform:scaleX(0.967)">Format</div>
<div class="a" style="left:14.30px;top:103.54px;color:#333;transform:scaleX(0.853)">Save</div>
<div class="a" style="left:55.20px;top:103.54px;color:#333;transform:scaleX(0.949)">Crop</div>
<div class="a" style="left:97.50px;top:103.54px;color:#333;transform:scaleX(0.910)">Deselect</div>
<div class="a" style="left:180.50px;top:66.54px;color:#333;transform:scaleX(0.941)">Cut</div>
<div class="a" style="left:180.50px;top:90.44px;color:#333;transform:scaleX(0.946)">Copy</div>
<div class="a" style="left:180.50px;top:114.44px;color:#333;transform:scaleX(0.914)">Delete</div>
<div class="a" style="left:251.30px;top:74.74px;color:#333;transform:scaleX(0.938)">Left</div>
<div class="a" style="left:251.10px;top:106.44px;color:#333;transform:scaleX(0.976)">Top</div>
<div class="a" style="left:371.00px;top:74.74px;color:#333;transform:scaleX(1.043)">Width</div>
<div class="a" style="left:367.20px;top:106.44px;color:#333;transform:scaleX(1.004)">Height</div>
<div class="a" style="left:280.10px;top:73.84px;color:#000;transform:scaleX(0.913)">76 px</div>
<div class="a" style="left:280.10px;top:105.84px;color:#000;transform:scaleX(0.902)">199 px</div>
<div class="a" style="left:412.30px;top:73.84px;color:#000;transform:scaleX(0.899)">121 px</div>
<div class="a" style="left:412.30px;top:105.84px;color:#000;transform:scaleX(0.922)">114 px</div>
<div class="a" style="left:509.20px;top:73.84px;color:#000;transform:scaleX(0.885)">100 %</div>
<div class="a" style="left:506.70px;top:106.74px;color:#333;transform:scaleX(0.928)">Rotate</div>
<div class="a" style="left:583.00px;top:103.54px;color:#333;transform:scaleX(0.921)">Pixelate</div>
<div class="a" style="left:641.00px;top:103.54px;color:#333;transform:scaleX(0.970)">Blur</div>
<div class="a" style="left:681.20px;top:103.54px;color:#333;transform:scaleX(0.942)">Sharpen</div>
<div class="a" style="left:748.10px;top:103.54px;color:#333;transform:scaleX(0.958)">Invert</div>
<div class="a" style="left:794.50px;top:103.54px;color:#333;transform:scaleX(0.891)">GrayScale</div>
<div class="a" style="left:869.20px;top:103.54px;color:#333;transform:scaleX(0.958)">Brightness</div>
<div class="a" style="left:869.50px;top:118.54px;color:#333;transform:scaleX(1.002)">/ Contrast</div>
<div class="a" style="left:952.20px;top:103.54px;color:#333;transform:scaleX(0.957)">Hue /</div>
<div class="a" style="left:940.00px;top:118.54px;color:#333;transform:scaleX(0.979)">Saturation</div>
<div class="a" style="left:1016.10px;top:103.54px;color:#333;transform:scaleX(1.011)">Color</div>
<div class="a" style="left:1010.20px;top:118.54px;color:#333;transform:scaleX(0.963)">balance</div>
<div class="a" style="left:798.70px;top:137.14px;color:#444;transform:scaleX(0.963)">Effects</div>
<div class="a" style="left:56.90px;top:162.54px;color:#222;transform:scaleX(0.913)">Image 1</div>
<div class="a" style="left:3.10px;top:736.64px;color:#333;transform:scaleX(0.987)">Apply a pixelation effect</div>
<div class="a" style="left:563.20px;top:736.64px;color:#333;transform:scaleX(0.890)">121 x 114</div>
<div class="a" style="left:703.70px;top:736.64px;color:#333;transform:scaleX(0.915)">622, -3</div>
<div class="a" style="left:839.30px;top:736.64px;color:#333;transform:scaleX(0.894)">849 x 440</div>
<div class="a" style="left:1106.10px;top:736.64px;color:#333;transform:scaleX(0.896)">100%</div>
</div>
<div id="bl" class="a"></div><div id="br" class="a"></div><div id="bb" class="a"></div>
</body></html>
